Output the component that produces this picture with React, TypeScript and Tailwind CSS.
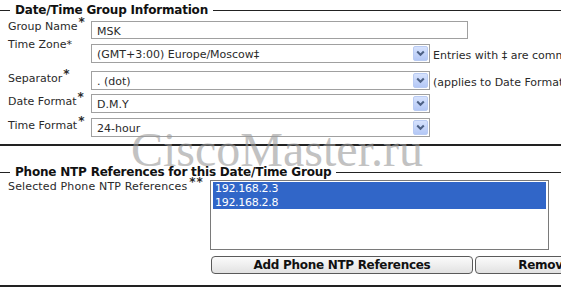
import React from "react";

const FONT = { fontFamily: '"DejaVu Sans", Verdana, sans-serif' };

function Arrow() {
  return (
    <div className="absolute right-[1px] top-[1px] bottom-[1px] w-[15px] bg-gradient-to-b from-[#d6e2fd] to-[#b4c8f6] border border-[#b9cbf3] rounded-[2px] flex items-center justify-center">
      <svg width="9" height="7" viewBox="0 0 9 7">
        <path d="M1.2 1.5 L4.5 4.8 L7.8 1.5" fill="none" stroke="#4d6185" strokeWidth="2" />
      </svg>
    </div>
  );
}

function Star() {
  return <span className="relative top-[-4px] text-[12px] font-bold ml-[1px]">*</span>;
}

type Row = {
  label: string;
  star: "sup" | "plain";
  value: string;
  select: boolean;
  width: string;
  rowH: string;
  labelOff: string;
  note?: string;
};

const rows: Row[] = [
  { label: "Group Name", star: "sup", value: "MSK", select: false, width: "w-[377px]", rowH: "h-[23px]", labelOff: "mt-[-1px]" },
  { label: "Time Zone", star: "plain", value: "(GMT+3:00) Europe/Moscow‡", select: true, width: "w-[339px]", rowH: "h-[27px]", labelOff: "mt-[-6px]", note: "Entries with ‡ are commonly used time zones" },
  { label: "Separator", star: "sup", value: ". (dot)", select: true, width: "w-[339px]", rowH: "h-[23px]", labelOff: "mt-[1px]", note: "(applies to Date Format only)" },
  { label: "Date Format", star: "sup", value: "D.M.Y", select: true, width: "w-[339px]", rowH: "h-[24px]", labelOff: "mt-[1px]" },
  { label: "Time Format", star: "sup", value: "24-hour", select: true, width: "w-[339px]", rowH: "h-[19px]", labelOff: "mt-[1px]" },
];

function Legend({ text, h }: { text: string; h: string }) {
  return (
    <div className={`flex items-center ${h}`}>
      <div className="w-[10px] h-px bg-[#222]" />
      <span className="ml-[5px] mr-[5px] text-[12px] font-bold tracking-[-0.2px] text-[#111] leading-[15px] whitespace-nowrap">
        {text}
      </span>
      <div className="flex-1 h-px bg-[#222]" />
    </div>
  );
}

export default function App() {
  return (
    <div className="relative w-[561px] h-[295px] bg-white overflow-hidden text-[#2a2a2a]" style={FONT}>
      <div className="pt-[2px]">
        <Legend text="Date/Time Group Information" h="h-[17px]" />
        <div className="mt-[2px]">
          {rows.map((r) => (
            <div key={r.label} className={`flex items-start ${r.rowH}`}>
              <div className={`shrink-0 w-[91px] pl-[8px] text-[11px] leading-[13px] whitespace-nowrap ${r.labelOff}`}>
                {r.label}
                {r.star === "sup" ? <Star /> : <span>*</span>}
              </div>
              <div
                className={`relative shrink-0 ${r.width} ${r.select ? "h-[19px]" : "h-[18px]"} border border-[#a0a0a0] bg-white pl-[5px] pt-[3px] text-[11px] leading-[13px] whitespace-nowrap`}
              >
                {r.value}
                {r.select && <Arrow />}
              </div>
              {r.note && (
                <div className="shrink-0 ml-[3px] pt-[5px] text-[11px] leading-[13px] whitespace-nowrap">{r.note}</div>
              )}
            </div>
          ))}
        </div>
        <div className="mt-[7px] h-[2px] bg-[#222]" />

        <div className="mt-[19px]">
          <Legend text="Phone NTP References for this Date/Time Group" h="h-[15px]" />
        </div>
        <div className="flex items-start">
          <div className="shrink-0 w-[210px] pl-[8px] text-[11px] leading-[13px] tracking-[0.15px] whitespace-nowrap">
            Selected Phone NTP References
            <span className="relative top-[-4px] text-[12px] font-bold ml-[2px] tracking-[1px]">**</span>
          </div>
          <div className="shrink-0 w-[339px] h-[70px] border border-[#7a7a7a] bg-white pt-[1px] px-[2px]">
            {["192.168.2.3", "192.168.2.8"].map((ip) => (
              <div
                key={ip}
                className="h-[13.5px] bg-[#3166c8] text-white text-[11px] leading-[13.5px] pl-[2px] tracking-[-0.3px]"
              >
                {ip}
              </div>
            ))}
          </div>
        </div>
        <div className="mt-[6px] flex gap-[2px] pl-[211px]">
          <button className="shrink-0 w-[262px] h-[18px] rounded-[4px] border border-[#5a5a5a] bg-gradient-to-b from-[#fbfbfb] to-[#e2e2e2] text-[12px] font-bold tracking-[-0.3px] leading-[16px] text-[#111] whitespace-nowrap">
            Add Phone NTP References
          </button>
          <button className="shrink-0 w-[290px] h-[18px] rounded-[4px] border border-[#5a5a5a] bg-gradient-to-b from-[#fbfbfb] to-[#e2e2e2] text-[12px] font-bold tracking-[-0.3px] leading-[16px] text-[#111] whitespace-nowrap">
            Remove Phone NTP References
          </button>
        </div>
        <div className="mt-[11px] h-[2px] bg-[#222]" />
      </div>

      <div
        className="absolute left-[131px] top-[126px] text-[48px] leading-[48px] text-[#9a9a9a] opacity-60 pointer-events-none whitespace-nowrap"
        style={{ fontFamily: '"Liberation Serif", "Times New Roman", serif' }}
      >
        CiscoMaster.ru
      </div>
    </div>
  );
}
